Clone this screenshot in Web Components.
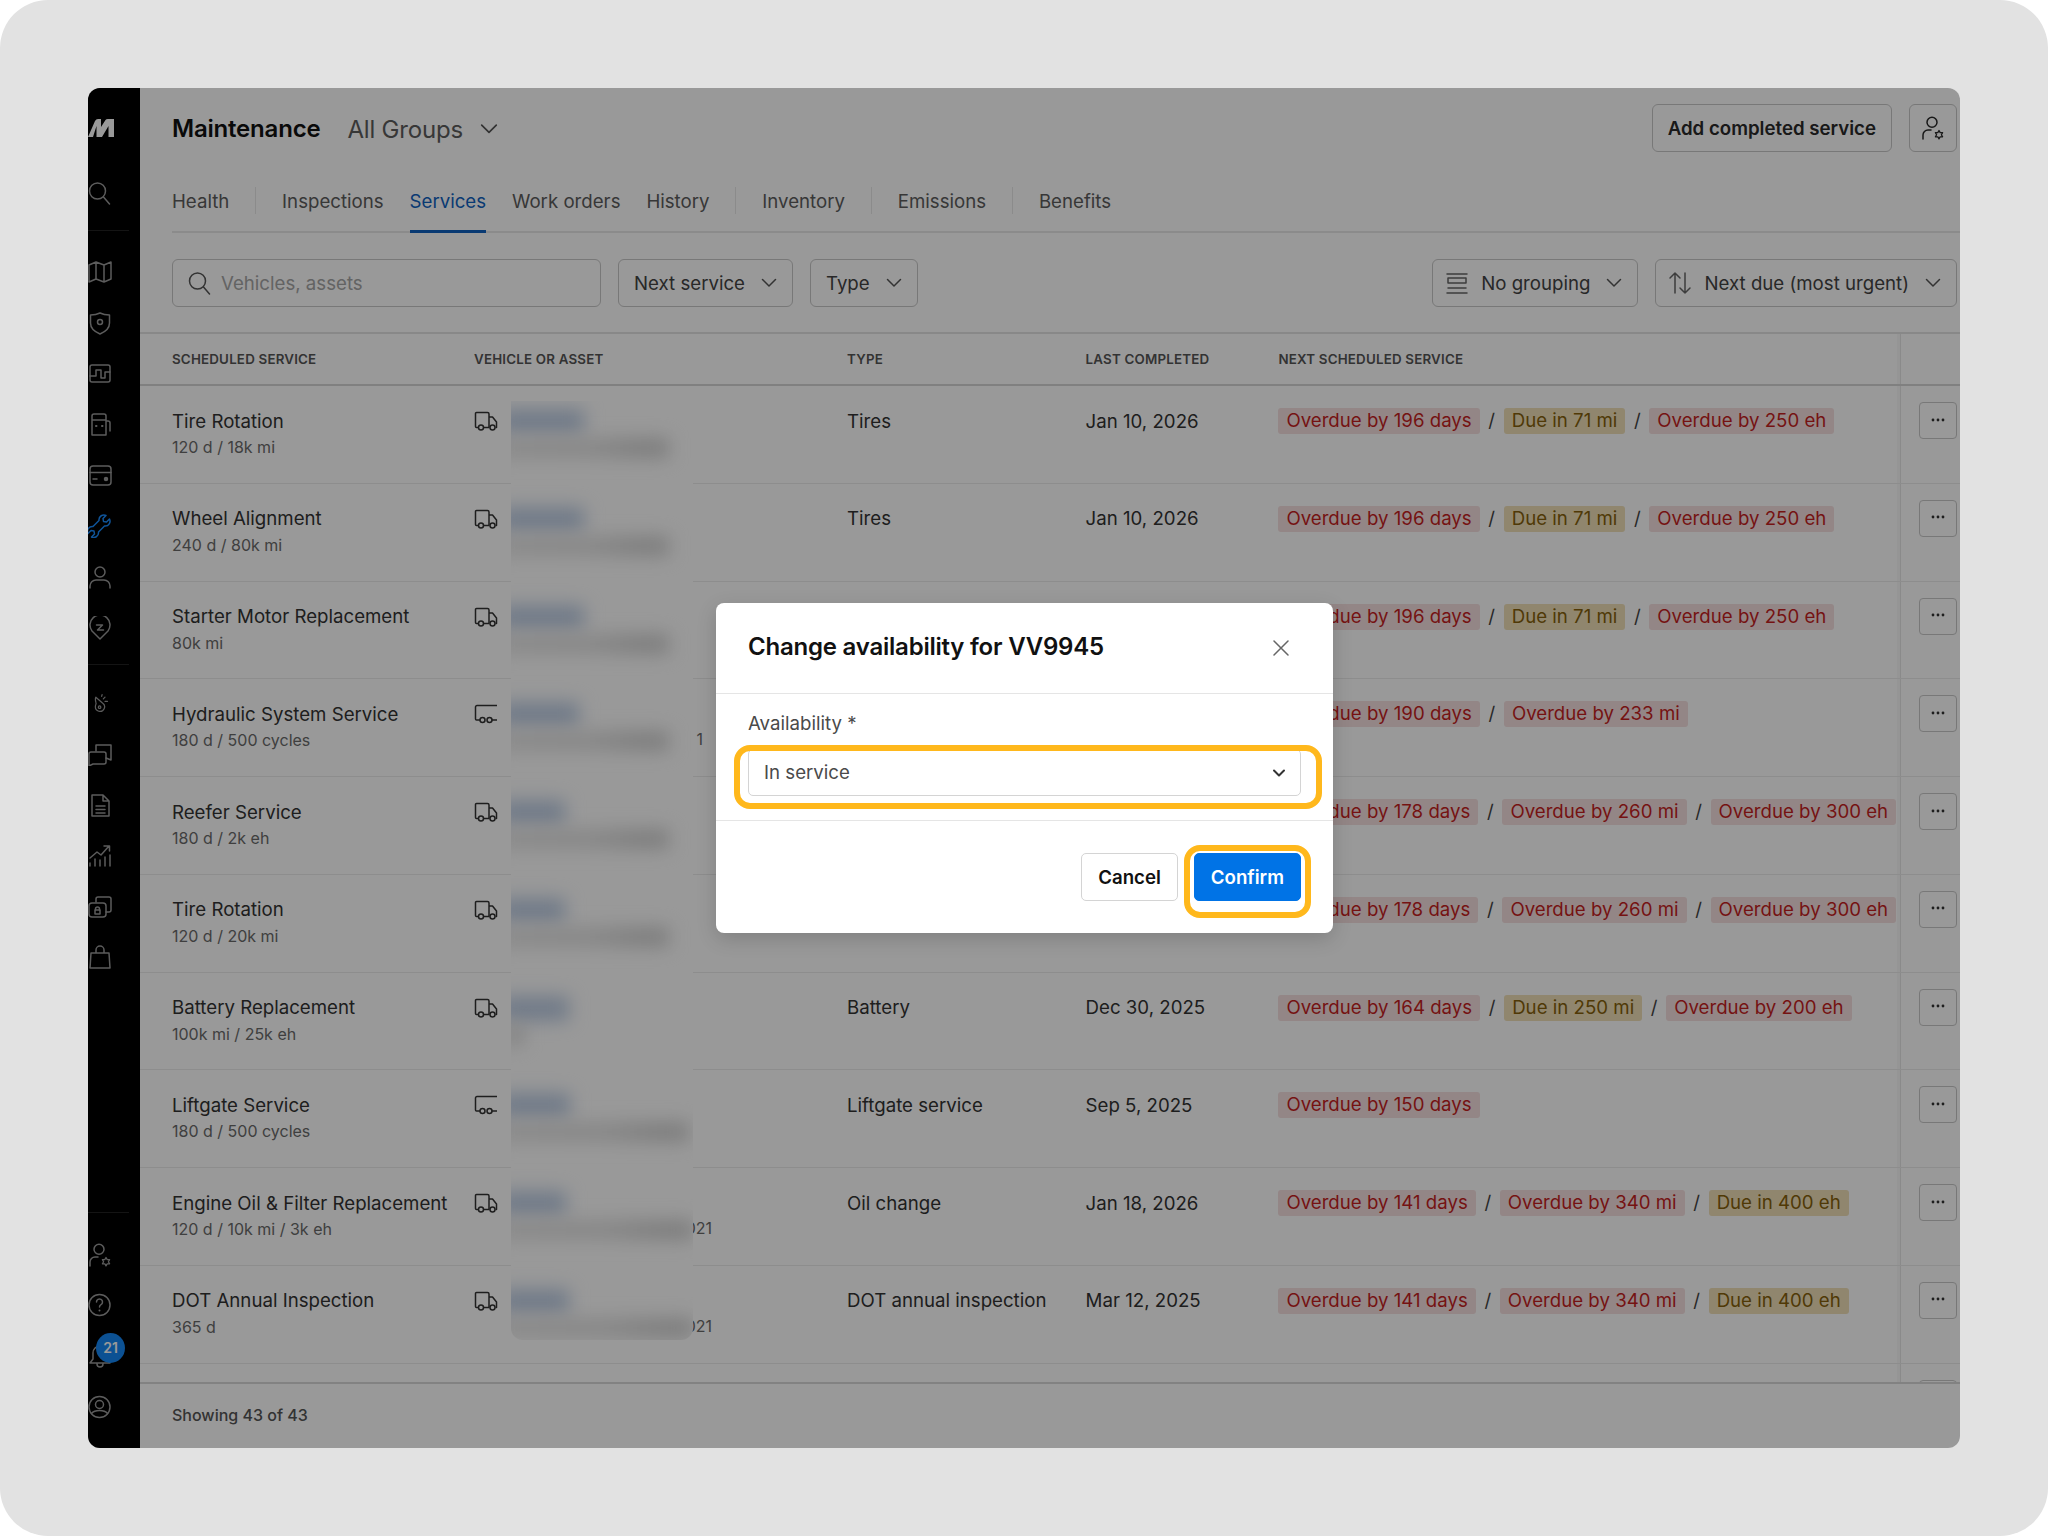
<!DOCTYPE html>
<html lang="en">
<head>
<meta charset="utf-8">
<title>Maintenance</title>
<style>
  html, body { margin: 0; padding: 0; background: #fff; }
</style>
</head>
<body>
<maintenance-window>
  <side-nav slot="nav"></side-nav>
  <page-header></page-header>
  <tab-bar active="Services"></tab-bar>
  <filter-bar></filter-bar>
  <service-table></service-table>
  <availability-dialog slot="dialog"></availability-dialog>
</maintenance-window>

<script>
const FONT = `"Inter", "Liberation Sans", sans-serif`;
const BODY = "18.67px";

const svg = (body, size = 24, box = "0 0 24 24", width = 1.5) =>
  `<svg width="${size}" height="${size}" viewBox="${box}" fill="none" stroke="currentColor" stroke-width="${width}" stroke-linecap="round" stroke-linejoin="round">${body}</svg>`;

const CHEVRON = `<svg width="16" height="16" viewBox="0 0 16 16" fill="none" stroke="currentColor" stroke-width="1.5" stroke-linecap="round" stroke-linejoin="round"><path d="M1.5 4.5 8 11l6.5-6.5"/></svg>`;
const SEARCH = `<circle cx="9.5" cy="10" r="8"/><path d="m15.5 16 6 7"/>`;
const USER_GEAR = `<circle cx="11" cy="6.2" r="5"/><path d="M2 23v-4a5 5 0 0 1 5-5h3"/><path d="m18 14.500 1.200 2.100h2.400l-1.200 2.100 1.200 2.100h-2.400l-1.200 2.100-1.200-2.100h-2.400l1.200-2.100-1.200-2.100h2.400z" stroke-width="1.3"/>`;

const ICONS = {
  search: SEARCH,
  map: `<path d="M1 5l7-3 8 3 7-3v17l-7 3-8-3-7 3zM8 2v17M16 5v17"/>`,
  shield: `<path d="M12 2c-3 1.500-6 2-9.500 2v8c0 5 3.500 8.500 9.500 11 6-2.500 9.500-6 9.500-11V4C18 4 15 3.500 12 2z"/><circle cx="12" cy="11" r="2.500"/>`,
  pulse: `<rect x="2" y="3" width="20" height="17" rx="2"/><path d="M2 14h6V8h5v8h4v-6h5"/>`,
  fuel: `<path d="M4 23V4a2 2 0 0 1 2-2h10a2 2 0 0 1 2 2v19zM4 8h14M18 9h2a2 2 0 0 1 2 2v8"/><path d="M8 14h.5M14 14h.5" stroke-width="2"/>`,
  card: `<rect x="2" y="3" width="21" height="19" rx="3"/><path d="M2 9.500h21M5 16h4"/><circle cx="18" cy="16" r="1.500" fill="currentColor"/>`,
  wrench: `<path d="M17 1.500l-3 3 .5 3 3 .5 3-3c1.500 3-.5 7.500-5 7l-6 6c.5 4.500-4 6.500-7 5l3-3-.5-3-3-.5-3 3c-1.500-3 .5-7.500 5-7l6-6c-.5-4.500 4-6.500 7-5z"/>`,
  person: `<circle cx="12" cy="7" r="5"/><path d="M2 23v-2a6 6 0 0 1 6-6h8a6 6 0 0 1 6 6v2"/>`,
  tag: `<path d="M12 23l-8-8a10 10 0 1 1 16 0z"/><path d="M8.500 9h6l-5 5h6"/>`,
  whistle: `<path d="M7 5l8 7a5.500 5.500 0 1 1-8.500 4c0-2 1.500-3 .5-5-.5-2-1-4 0-6z"/><circle cx="11.500" cy="17" r="1.500"/><path d="M16 7l2-2M18 10h3M14 4l.5-2"/>`,
  chats: `<path d="M1 12a2 2 0 0 1 2-2h13a2 2 0 0 1 2 2v8a2 2 0 0 1-2 2H5l-4 2z"/><path d="M8 9V3h15v15l-5-2"/>`,
  doc: `<path d="M4 2h11l6 6v15H4zM15 2v6h6M8 13h9M8 16.500h9M8 20h9"/>`,
  growth: `<path d="M2 23v-3M7 23v-7M12 23v-6M17 23v-9M22 23V12M2 15l7-6 4 3 8-9M16 3h5.500v5"/>`,
  lock: `<path d="M8 8V5a2 2 0 0 1 2-2h11a2 2 0 0 1 2 2v11a2 2 0 0 1-2 2h-3"/><rect x="1" y="9" width="17" height="14" rx="3"/><rect x="7" y="16" width="5" height="4"/><path d="M7.500 16v-1a2 2 0 0 1 4 0v1"/>`,
  bag: `<path d="M3 8h18l1 15H2zM8 8V5a4 4 0 0 1 8 0v3"/>`,
  userGear: USER_GEAR,
  help: `<circle cx="11.500" cy="12" r="10.500"/><path d="M8.500 9a3 3 0 1 1 4.500 2.600c-1 .6-1.500 1.200-1.500 2.400"/><path d="M11.500 17.500h.01" stroke-width="2"/>`,
  bell: `<path d="M12 2a7 7 0 0 0-7 7v6l-3 4h20l-3-4V9a7 7 0 0 0-7-7zM9 20a3 3 0 0 0 6 0"/>`,
  account: `<circle cx="11.500" cy="12" r="10.500"/><circle cx="11.500" cy="9.500" r="4"/><path d="M3.500 18.500c2-2.500 4.500-3 8-3s6 .5 8 3"/>`
};

class MaintenanceWindow extends HTMLElement {
  constructor() {
    super();
    this.attachShadow({ mode: "open" });
    this.shadowRoot.innerHTML = `
      <style>
        :host {
          display: block;
          box-sizing: border-box;
          width: 2048px;
          height: 1536px;
          padding: 88px;
          background: #e2e2e2;
          border-radius: 48px;
          font-family: ${FONT};
        }
        .window {
          position: relative;
          display: flex;
          height: 100%;
          background: #fff;
          border-radius: 12px;
          overflow: hidden;
        }
        .main {
          flex: 1;
          min-width: 0;
          display: flex;
          flex-direction: column;
        }
        .scrim {
          position: absolute;
          inset: 0;
          display: flex;
          align-items: center;
          justify-content: center;
          background: rgba(0, 0, 0, .4);
        }
      </style>
      <div class="window">
        <slot name="nav"></slot>
        <div class="main"><slot></slot></div>
        <div class="scrim"><slot name="dialog"></slot></div>
      </div>
    `;
  }
}

class SideNav extends HTMLElement {
  constructor() {
    super();
    this.attachShadow({ mode: "open" });
  }

  connectedCallback() {
    const item = (name, cls = "") => `<div class="item ${cls}">${svg(ICONS[name], 24, name === "wrench" ? "-1 0 24 24" : "0 0 24 24")}</div>`;
    this.shadowRoot.innerHTML = `
      <style>
        :host {
          display: flex;
          flex-direction: column;
          flex: none;
          width: 52px;
          height: 100%;
          background: #000;
          color: #9a9a9a;
          overflow: hidden;
        }
        .logo { height: 18px; margin-top: 31px; color: #fff; }
        .logo svg { display: block; }
        .item {
          position: relative;
          flex: none;
          height: 50.8px;
          display: flex;
          align-items: center;
        }
        .item svg { display: block; }
        .search { margin-top: 44px; height: 24px; }
        .rule { height: 1px; width: 41px; background: #222; flex: none; }
        .r1 { margin: 25px 0 15.7px; }
        .r2 { margin: 11px 0 12.6px; }
        .r3 { margin: 0 0 16px; }
        .active { color: #1a8cff; }
        .small svg { width: 20px; height: 20px; margin-left: 2px; }
        .spacer { flex: 1; }
        .badge {
          position: absolute;
          left: 8px;
          top: 2px;
          width: 29px;
          height: 30px;
          border-radius: 50%;
          background: #1487f5;
          color: #fff;
          font: 600 14px/30px ${FONT};
          text-align: center;
        }
      </style>
      <div class="logo">
        <svg width="26" height="18" viewBox="0 0 26 18" fill="currentColor"><path d="M0 18 7 2q1-2 3-2h3v8l4.500-7q.5-1 2.500-1h6v18h-5.500V7L14 18H8.500V7L5 18z"/></svg>
      </div>
      <div class="item search">${svg(ICONS.search)}</div>
      <div class="rule r1"></div>
      ${item("map")}${item("shield")}${item("pulse")}${item("fuel")}${item("card")}${item("wrench", "active")}${item("person")}${item("tag")}
      <div class="rule r2"></div>
      ${item("whistle", "small")}${item("chats")}${item("doc")}${item("growth")}${item("lock")}${item("bag")}
      <div class="spacer"></div>
      <div class="rule r3"></div>
      ${item("userGear")}${item("help")}
      <div class="item">${svg(ICONS.bell)}<span class="badge">21</span></div>
      ${item("account")}
      <div style="height:15.6px;flex:none"></div>
    `;
  }
}

class PageHeader extends HTMLElement {
  constructor() {
    super();
    this.attachShadow({ mode: "open" });
    this.shadowRoot.innerHTML = `
      <style>
        :host {
          display: flex;
          flex: none;
          align-items: center;
          height: 48px;
          padding: 16px 3px 0 32px;
          font-family: ${FONT};
        }
        h1 { margin: 2px 0 0; font: 600 24px/32px ${FONT}; color: #111; letter-spacing: -.2px; }
        .group { margin: 2px 0 0 27px; font-size: 24px; color: #5c5c5c; letter-spacing: -.2px; }
        .chev { margin: 2px 0 0 17px; display: flex; color: #555; }
        .spacer { flex: 1; }
        button {
          height: 48px;
          border: 1px solid #c8c8c8;
          border-radius: 6px;
          background: #fff;
          color: #2a2a2a;
          font: 600 ${BODY} ${FONT};
          padding: 0 15px;
        }
        .icon { width: 48px; margin-left: 17px; padding: 0; display: flex; align-items: center; justify-content: center; }
      </style>
      <h1>Maintenance</h1>
      <span class="group">All Groups</span>
      <span class="chev">${CHEVRON.replace('width="16" height="16"', 'width="18" height="18"')}</span>
      <span class="spacer"></span>
      <button>Add completed service</button>
      <button class="icon">${svg(USER_GEAR)}</button>
    `;
  }
}

class TabBar extends HTMLElement {
  constructor() {
    super();
    this.attachShadow({ mode: "open" });
  }

  connectedCallback() {
    const active = this.getAttribute("active");
    const tabs = ["Health", "|", "Inspections", "Services", "Work orders", "History", "|", "Inventory", "|", "Emissions", "|", "Benefits"];
    this.shadowRoot.innerHTML = `
      <style>
        :host {
          display: flex;
          flex: none;
          box-sizing: border-box;
          height: 81px;
          margin-left: 32px;
          gap: 25.9px;
          align-items: flex-end;
          border-bottom: 2px solid #e8e8e8;
          font: ${BODY}/24px ${FONT};
        }
        .tab { padding-bottom: 16.5px; margin-bottom: -2px; color: #5c5c5c; border-bottom: 3px solid transparent; }
        .tab.on { color: #0f62c0; border-bottom-color: #0f62c0; }
        .sep { width: 1px; height: 27px; margin-bottom: 17px; background: #e8e8e8; }
      </style>
      ${tabs.map(t => t === "|" ? `<span class="sep"></span>` : `<span class="tab ${t === active ? "on" : ""}">${t}</span>`).join("")}
    `;
  }
}

class FilterDropdown extends HTMLElement {
  constructor() {
    super();
    this.attachShadow({ mode: "open" });
    this.shadowRoot.innerHTML = `
      <style>
        :host {
          display: flex;
          align-items: center;
          box-sizing: border-box;
          height: 48px;
          padding: 1px 15px 0;
          gap: 16px;
          border: 1px solid #c8c8c8;
          border-radius: 6px;
          background: #fff;
          color: #444;
          font: ${BODY} ${FONT};
          white-space: nowrap;
        }
        :host([icon]) { padding-left: 12px; }
        ::slotted([slot="icon"]) { margin-right: -4px; }
        .chev { display: flex; color: #555; }
      </style>
      <slot name="icon"></slot>
      <slot></slot>
      <span class="chev">${CHEVRON}</span>
    `;
  }
}

class FilterBar extends HTMLElement {
  constructor() {
    super();
    this.attachShadow({ mode: "open" });
    this.shadowRoot.innerHTML = `
      <style>
        :host {
          display: flex;
          flex: none;
          box-sizing: border-box;
          align-items: center;
          height: 101px;
          padding: 0 3px 0 32px;
          gap: 17px;
          border-bottom: 2px solid #e3e3e3;
          font: ${BODY} ${FONT};
        }
        .search {
          display: flex;
          align-items: center;
          box-sizing: border-box;
          width: 429px;
          height: 48px;
          padding: 0 15px;
          gap: 9px;
          border: 1px solid #c8c8c8;
          border-radius: 6px;
          color: #555;
        }
        .search span { color: #a6a6a6; padding-top: 1px; }
        .search svg, .i svg { display: block; }
        .spacer { flex: 1; }
        .i { color: #666; display: block; }
      </style>
      <div class="search">${svg(SEARCH)}<span>Vehicles, assets</span></div>
      <filter-dropdown>Next service</filter-dropdown>
      <filter-dropdown>Type</filter-dropdown>
      <span class="spacer"></span>
      <filter-dropdown icon><span slot="icon" class="i">${svg(`<path d="M2 3h20M2 22h20"/><rect x="3" y="7" width="18" height="5"/><path d="M3 17h18"/>`)}</span>No grouping</filter-dropdown>
      <filter-dropdown icon><span slot="icon" class="i">${svg(`<path d="M7 22V2M2 7l5-5 5 5M17 2v20M12 17l5 5 5-5"/>`)}</span>Next due (most urgent)</filter-dropdown>
    `;
  }
}

class StatusBadge extends HTMLElement {
  constructor() {
    super();
    this.attachShadow({ mode: "open" });
    this.shadowRoot.innerHTML = `
      <style>
        :host {
          display: inline-block;
          height: 26px;
          padding: 0 8px;
          border-radius: 3px;
          font: ${BODY}/26px ${FONT};
          white-space: nowrap;
          background: #f6e0e0;
          color: #c41f1f;
        }
        :host([tone="warn"]) { background: #f0e0b8; color: #85600a; }
      </style>
      <slot></slot>
    `;
  }
}

const GRID = "302px 373px 238.6px 192.8px 1fr 60px";

class ServiceRow extends HTMLElement {
  constructor() {
    super();
    this.attachShadow({ mode: "open" });
  }

  connectedCallback() {
    const a = (k) => this.getAttribute(k) || "";
    const truck = `<svg width="24" height="20" viewBox="0 0 24 20" fill="none" stroke="currentColor" stroke-width="1.5" stroke-linejoin="round"><path d="M4 16.500H2.500a1 1 0 0 1-1-1V2.500a1 1 0 0 1 1-1h11a1.500 1.500 0 0 1 1.500 1.500v13.500M10 16.500h5.500M15 6h3.500l4 5v5.500h-1"/><circle cx="7" cy="16.500" r="2.500"/><circle cx="18.500" cy="16.500" r="2.500"/></svg>`;
    const trailer = `<svg width="24" height="20" viewBox="0 0 24 20" fill="none" stroke="currentColor" stroke-width="1.5" stroke-linejoin="round"><path d="M23 1.500H3a1.500 1.500 0 0 0-1.500 1.500v12a1 1 0 0 0 1 1H6M18 16h5"/><circle cx="8.500" cy="16" r="2.500"/><circle cx="15.500" cy="16" r="2.500"/></svg>`;
    const due = a("due") ? a("due").split("|").map(d => {
      const warn = d.startsWith("Due");
      return `<status-badge tone="${warn ? "warn" : "over"}">${d}</status-badge>`;
    }).join(`<span class="slash">/</span>`) : "";
    this.shadowRoot.innerHTML = `
      <style>
        :host {
          display: grid;
          grid-template-columns: ${GRID};
          box-sizing: border-box;
          height: 97.75px;
          padding-left: 32px;
          flex: none;
          border-bottom: 1px solid #ececec;
          font: ${BODY}/24px ${FONT};
          color: #333;
        }
        .cell { padding-top: 23.5px; min-width: 0; white-space: nowrap; }
        .sub { margin-top: 2.5px; font-size: 16px; line-height: 22px; color: #6a6a6a; }
        .asset { display: flex; gap: 13px; padding-top: 25px; }
        .asset svg { display: block; flex: none; }
        .tail { position: relative; margin-top: 24px; font-size: 16px; line-height: 22px; text-align: right; color: #6a6a6a; }
        .due { display: flex; align-items: center; align-self: start; padding-top: 22px; }
        .slash { width: 24px; text-align: center; color: #444; }
        .act { border-left: 1px solid #e6e6e6; box-shadow: -3px 0 0 rgba(0, 0, 0, .025); padding: 16px 0 0 18px; }
        .more {
          display: flex;
          align-items: center;
          justify-content: center;
          box-sizing: border-box;
          width: 38px;
          height: 37px;
          border: 1px solid #c8c8c8;
          border-radius: 4px;
          color: #333;
        }
        .more svg { display: block; }
      </style>
      <div class="cell">${a("name")}<div class="sub">${a("sub")}</div></div>
      <div class="asset">${a("asset") === "trailer" ? trailer : truck}<div class="tail" style="width:${a("tail-width") || 190}px">${a("tail")}</div></div>
      <div class="cell">${a("type")}</div>
      <div class="cell">${a("date")}</div>
      <div class="due">${due}</div>
      <div class="act"><div class="more"><svg width="16" height="16" viewBox="0 0 16 16" fill="currentColor"><circle cx="3" cy="7" r="1.4"/><circle cx="8" cy="7" r="1.4"/><circle cx="13" cy="7" r="1.4"/></svg></div></div>
    `;
  }
}

// blur over the vehicle names, sits on top of the table
class RedactedPanel extends HTMLElement {
  constructor() {
    super();
    this.attachShadow({ mode: "open" });
  }

  connectedCallback() {
    const blobs = [[73, 158], [73, 158], [73, 158], [68, 158], [54, 158], [54, 158], [58, 12], [59, 178], [55, 182], [58, 182]];
    this.shadowRoot.innerHTML = `
      <style>
        :host {
          position: absolute;
          left: 371px;
          top: 15px;
          width: 182px;
          height: 939px;
          background: #fff;
          border-radius: 0 0 12px 12px;
          overflow: hidden;
        }
        .row { position: relative; height: 97.75px; }
        .blue, .gray { position: absolute; left: -12px; filter: blur(9px); }
        .blue { top: 8px; height: 25px; background: #bdcde4; }
        .gray { top: 37px; height: 20px; background: linear-gradient(90deg, #e6e6e6, #e2e2e2 55%, #d2d2d2 85%); }
      </style>
      ${blobs.map(([b, g]) => `<div class="row"><div class="blue" style="width:${b + 12}px"></div><div class="gray" style="width:${g + 12}px"></div></div>`).join("")}
    `;
  }
}

class ServiceTable extends HTMLElement {
  constructor() {
    super();
    this.attachShadow({ mode: "open" });
  }

  connectedCallback() {
    const over196 = "Overdue by 196 days|Due in 71 mi|Overdue by 250 eh";
    const over178 = "Overdue by 178 days|Overdue by 260 mi|Overdue by 300 eh";
    const over141 = "Overdue by 141 days|Overdue by 340 mi|Due in 400 eh";
    const rows = [
      { name: "Tire Rotation", sub: "120 d / 18k mi", type: "Tires", date: "Jan 10, 2026", due: over196 },
      { name: "Wheel Alignment", sub: "240 d / 80k mi", type: "Tires", date: "Jan 10, 2026", due: over196 },
      { name: "Starter Motor Replacement", sub: "80k mi", due: over196 },
      { name: "Hydraulic System Service", sub: "180 d / 500 cycles", asset: "trailer", tail: "1", "tail-width": 192, due: "Overdue by 190 days|Overdue by 233 mi" },
      { name: "Reefer Service", sub: "180 d / 2k eh", due: over178 },
      { name: "Tire Rotation", sub: "120 d / 20k mi", due: over178 },
      { name: "Battery Replacement", sub: "100k mi / 25k eh", type: "Battery", date: "Dec 30, 2025", due: "Overdue by 164 days|Due in 250 mi|Overdue by 200 eh" },
      { name: "Liftgate Service", sub: "180 d / 500 cycles", asset: "trailer", type: "Liftgate service", date: "Sep 5, 2025", due: "Overdue by 150 days" },
      { name: "Engine Oil &amp; Filter Replacement", sub: "120 d / 10k mi / 3k eh", tail: "021", "tail-width": 201, type: "Oil change", date: "Jan 18, 2026", due: over141 },
      { name: "DOT Annual Inspection", sub: "365 d", tail: "021", "tail-width": 201, type: "DOT annual inspection", date: "Mar 12, 2025", due: over141 },
      {}
    ];
    const attrs = (r) => Object.entries(r).map(([k, v]) => `${k}="${v}"`).join(" ");
    this.shadowRoot.innerHTML = `
      <style>
        :host {
          display: flex;
          flex-direction: column;
          flex: 1;
          min-height: 0;
          font-family: ${FONT};
        }
        .head {
          display: grid;
          grid-template-columns: ${GRID};
          flex: none;
          box-sizing: border-box;
          height: 52px;
          padding-left: 32px;
          border-bottom: 2px solid #d6d6d6;
          font: 600 13.33px/50px ${FONT};
          letter-spacing: .2px;
          color: #555;
          text-transform: uppercase;
        }
        .head .act { border-left: 1px solid #e6e6e6; box-shadow: -3px 0 0 rgba(0, 0, 0, .025); }
        .body { position: relative; flex: 1; min-height: 0; overflow: hidden; }
        .rows { display: flex; flex-direction: column; }
        .foot {
          flex: none;
          box-sizing: border-box;
          height: 66px;
          padding: 19px 0 0 32px;
          border-top: 2px solid #d9d9d9;
          font: 500 16px/24px ${FONT};
          color: #555;
        }
      </style>
      <div class="head">
        <span>Scheduled service</span>
        <span>Vehicle or asset</span>
        <span>Type</span>
        <span>Last completed</span>
        <span>Next scheduled service</span>
        <span class="act"></span>
      </div>
      <div class="body">
        <div class="rows">${rows.map(r => `<service-row ${attrs(r)}></service-row>`).join("")}</div>
        <redacted-panel></redacted-panel>
      </div>
      <div class="foot">Showing 43 of 43</div>
    `;
  }
}

class AvailabilityDialog extends HTMLElement {
  constructor() {
    super();
    this.attachShadow({ mode: "open" });
    this.shadowRoot.innerHTML = `
      <style>
        :host {
          display: block;
          width: 617px;
          margin-left: 1px;
          background: #fff;
          border-radius: 8px;
          box-shadow: 0 6px 20px rgba(0, 0, 0, .16);
          font-family: ${FONT};
        }
        .head {
          display: flex;
          justify-content: space-between;
          box-sizing: border-box;
          height: 91px;
          padding: 29px 44px 0 32px;
          border-bottom: 1px solid #e5e5e5;
        }
        h2 { margin: 0; font: 600 24px/30px ${FONT}; letter-spacing: -.22px; color: #111; }
        .close { margin-top: 8px; color: #666; }
        .close svg { display: block; }
        .body { box-sizing: border-box; height: 127px; padding: 18px 32px 0; border-bottom: 1px solid #e5e5e5; }
        label { display: block; font: ${BODY}/24px ${FONT}; color: #4a4a4a; }
        .select {
          position: relative;
          display: flex;
          align-items: center;
          justify-content: space-between;
          box-sizing: border-box;
          height: 47px;
          margin-top: 13px;
          padding: 0 14px 0 15px;
          border: 1px solid #d4d4d4;
          border-radius: 5px;
          font: ${BODY} ${FONT};
          color: #4a4a4a;
        }
        .select svg { display: block; color: #333; }
        .foot { display: flex; justify-content: flex-end; gap: 16px; padding: 32px; }
        button {
          position: relative;
          height: 48px;
          padding: 0 16px;
          border: 1px solid #d4d4d4;
          border-radius: 5px;
          background: #fff;
          color: #111;
          font: 600 ${BODY} ${FONT};
        }
        button.primary { background: #0073e6; border-color: #0073e6; color: #fff; }
        .ring {
          position: absolute;
          box-sizing: border-box;
          border: 6px solid #ffb81c;
          border-radius: 16px;
          pointer-events: none;
        }
        .ring.a { left: -15px; right: -22px; top: -5px; bottom: -14px; }
        .ring.b { left: -11px; right: -11px; top: -9px; bottom: -18px; }
      </style>
      <div class="head">
        <h2>Change availability for VV9945</h2>
        <div class="close"><svg width="16" height="16" viewBox="0 0 16 16" fill="none" stroke="currentColor" stroke-width="1.5" stroke-linecap="round"><path d="M1 1l14 14M15 1 1 15"/></svg></div>
      </div>
      <div class="body">
        <label>Availability *</label>
        <div class="select">
          <span>In service</span>
          <svg width="14" height="14" viewBox="0 0 14 14" fill="none" stroke="currentColor" stroke-width="2" stroke-linecap="round" stroke-linejoin="round"><path d="M2 4.500 7 9.500l5-5"/></svg>
          <div class="ring a"></div>
        </div>
      </div>
      <div class="foot">
        <button>Cancel</button>
        <button class="primary">Confirm<div class="ring b"></div></button>
      </div>
    `;
  }
}

customElements.define("maintenance-window", MaintenanceWindow);
customElements.define("side-nav", SideNav);
customElements.define("page-header", PageHeader);
customElements.define("tab-bar", TabBar);
customElements.define("filter-dropdown", FilterDropdown);
customElements.define("filter-bar", FilterBar);
customElements.define("status-badge", StatusBadge);
customElements.define("service-row", ServiceRow);
customElements.define("redacted-panel", RedactedPanel);
customElements.define("service-table", ServiceTable);
customElements.define("availability-dialog", AvailabilityDialog);
</script>
</body>
</html>
